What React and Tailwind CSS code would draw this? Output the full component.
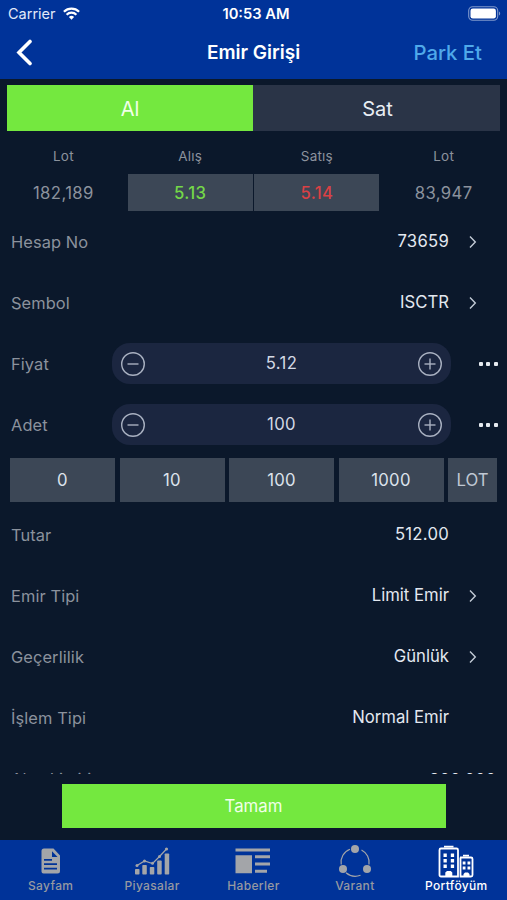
const ROW = "flex h-[61px] shrink-0 items-center pl-[11px]";
const LABEL = "pt-[2px] text-[16.4px] tracking-[0.1px] text-[#8b929d]";
const VALUE = "pt-px text-[16.7px] text-[#e3e8f0]";

function Chevron() {
  return (
    <svg className="ml-[19px] mr-[29px] mt-[1px]" width="10" height="14" viewBox="0 0 10 14" fill="none" stroke="#c3cbd6" strokeWidth="1.4">
      <path d="M2 1.5 7.3 7 2 12.5" />
    </svg>
  );
}

function Row({ label, value, chevron, numeric }) {
  return (
    <div className={ROW}>
      <span className={LABEL}>{label}</span>
      <span className={`ml-auto ${VALUE} ${numeric ? "tracking-[0.25px]" : ""}`}>{value}</span>
      {chevron ? <Chevron /> : <span className="w-[58px]" />}
    </div>
  );
}

function Circle({ plus }) {
  return (
    <svg width="26" height="26" viewBox="0 0 26 26" fill="none" stroke="#a9b1c1" strokeWidth="1.4">
      <circle cx="13" cy="13" r="11.3" />
      <path d="M7.5 13h11" />
      {plus && <path d="M13 7.5v11" />}
    </svg>
  );
}

function Stepper({ label, value }) {
  return (
    <div className={ROW}>
      <span className={`w-[101px] ${LABEL}`}>{label}</span>
      <div className="flex h-[41px] w-[339px] items-center justify-between rounded-[18px] bg-[#1b2640] px-[8px]">
        <Circle />
        <span className="pt-px text-[16.7px] tracking-[0.4px] text-[#d3d9e4]">{value}</span>
        <Circle plus />
      </div>
      <div className="ml-[28px] flex gap-[3.4px]">
        <i className="size-[4px] rounded-[1px] bg-[#e6eaf0]" />
        <i className="size-[4px] rounded-[1px] bg-[#e6eaf0]" />
        <i className="size-[4px] rounded-[1px] bg-[#e6eaf0]" />
      </div>
    </div>
  );
}

function Quote({ title, value, tone }) {
  return (
    <div className="flex w-[127.200px] flex-col items-center">
      <span className="flex h-[35px] items-center pb-[1px] text-[13.5px] tracking-[0.2px] text-[#8b929d]">{title}</span>
      <div className={`flex h-[37px] w-[125px] items-center justify-center pt-[2px] text-[16.7px] tracking-[0.4px] ${tone}`}>{value}</div>
    </div>
  );
}

function PageIcon() {
  return (
    <svg width="20" height="26" viewBox="0 0 20 26">
      <path fill="#a3a5a9" fillRule="evenodd" d="M3 .5h9.5L19 7.5V23a2.5 2.5 0 0 1-2.5 2.5h-14A2 2 0 0 1 .5 23.500V3A2.500 2.500 0 0 1 3 .5ZM11 3.200V9h5.600ZM3 11v1.800h8V11ZM3 15.200V17h13v-1.800ZM3 19.700v1.800h13v-1.800Z" />
    </svg>
  );
}

function ChartIcon() {
  return (
    <svg width="36" height="28" viewBox="0 0 36 28" fill="#a3a5a9">
      <rect x="1" y="22" width="4.500" height="5.500" rx=".8" />
      <rect x="8.300" y="18" width="4.500" height="9.500" rx=".8" />
      <rect x="15.800" y="20" width="4.500" height="7.500" rx=".8" />
      <rect x="23.200" y="13.500" width="4.500" height="14" rx=".8" />
      <rect x="30.700" y="6.500" width="4.500" height="21" rx=".8" />
      <path d="m3 18.500 7.500-4.500 8 2.500 7-7L32.500 2" fill="none" stroke="#a3a5a9" strokeWidth="1.200" />
      <circle cx="3" cy="18.500" r="1.500" />
      <circle cx="10.500" cy="14" r="1.500" />
      <circle cx="18.500" cy="16.300" r="1.500" />
      <circle cx="25.500" cy="9.500" r="1.500" />
      <circle cx="32.500" cy="2" r="1.600" />
    </svg>
  );
}

function NewsIcon() {
  return (
    <svg width="36" height="26" viewBox="0 0 36 26" fill="#a3a5a9">
      <path d="M.5.500h34.500v3H.5ZM.5 7.300H17v18H.5ZM20 7.300h15v3H20ZM20 14.500h15v3H20ZM20 21.700h12v3H20Z" />
    </svg>
  );
}

function RingIcon() {
  return (
    <svg width="34" height="34" viewBox="0 0 34 34" fill="#a3a5a9">
      <g fill="none" stroke="#a3a5a9" strokeWidth="1.200">
        <path d="M12 5.200A14 14 0 0 0 3.200 20.500" />
        <path d="M23.500 6A14 14 0 0 1 31 20.500" />
        <path d="M8 28.800a14.500 14.500 0 0 0 14.500 2.500" />
      </g>
      <circle cx="17" cy="5" r="4" />
      <circle cx="5" cy="25" r="4" />
      <circle cx="29" cy="25" r="4" />
    </svg>
  );
}

function TowersIcon() {
  return (
    <svg width="36" height="33" viewBox="0 0 36 33">
      <g fill="none" stroke="#fff" strokeWidth="1.800">
        <path d="M20 31.500H3a1.500 1.500 0 0 1-1.500-1.500V5A1.500 1.500 0 0 1 3 3.500h15.500A1.500 1.500 0 0 1 20 5Z" />
        <path d="M22 12.500h11a1.500 1.500 0 0 1 1.500 1.500v16a1.500 1.500 0 0 1-1.500 1.500H22.500V12.500" />
        <path d="M6 1.700h9.500M25 10.700h6" />
      </g>
      <g fill="#fff">
        <path d="M5.500 8.500h3.300V12H5.500ZM12.800 8.500h3.300V12h-3.300ZM5.500 14h3.300v3.500H5.500ZM12.800 14h3.300v3.500h-3.300ZM5.500 19.500h3.300V23H5.500ZM12.800 19.500h3.300V23h-3.300Z" />
        <path d="M24.700 16.500h2.800v3h-2.800ZM29.500 16.500h2.800v3h-2.800ZM24.700 21.500h2.800v3h-2.800ZM29.500 21.500h2.800v3h-2.800Z" />
        <path d="M7.300 32v-4.500L9 26h3.800l1.500 1.500V32ZM25.500 32v-3l1.500-1.500h3l1.500 1.500v3Z" />
      </g>
    </svg>
  );
}

const TABS = [
  { name: "Sayfam", icon: <PageIcon />, tone: "text-[#9699a1]" },
  { name: "Piyasalar", icon: <ChartIcon />, tone: "text-[#9699a1]" },
  { name: "Haberler", icon: <NewsIcon />, tone: "text-[#9699a1]" },
  { name: "Varant", icon: <RingIcon />, tone: "text-[#9699a1]" },
  { name: "Portföyüm", icon: <TowersIcon />, tone: "text-white" },
];

export default function App() {
  return (
    <div className="flex h-[900px] w-[507px] flex-col overflow-hidden bg-[#0b182b] font-['Inter','Liberation_Sans',sans-serif]">
      <header className="flex h-[79px] shrink-0 flex-col bg-[#003399] text-white">
        <div className="grid h-[27px] grid-cols-3 items-center pl-[8px] pr-[6px]">
          <div className="flex items-center gap-[7px] text-[14.500px] text-[#e2e9f8]">
            Carrier
            <svg width="17" height="13" viewBox="0 0 17 13" fill="none" stroke="#fff" strokeWidth="2.200">
              <path d="M.9 4.700a10.800 10.800 0 0 1 15.200 0M3.600 7.700a7 7 0 0 1 9.800 0" />
              <path d="M8.500 12.700 5.900 10a3.700 3.700 0 0 1 5.200 0Z" fill="#fff" stroke="none" />
            </svg>
          </div>
          <span className="pl-[3px] pt-[2px] text-center text-[14.700px] font-semibold">10:53 AM</span>
          <svg className="ml-auto" width="33" height="15" viewBox="0 0 33 15">
            <rect x=".7" y=".7" width="29" height="13.600" rx="4" fill="none" stroke="#7f99cc" strokeWidth="1.100" />
            <rect x="2.500" y="2.500" width="25.400" height="10" rx="2.300" fill="#fff" />
            <path d="M31 5.500v4c1.600-.5 1.600-3.500 0-4Z" fill="#7f99cc" />
          </svg>
        </div>
        <div className="grid h-[52px] grid-cols-3 items-center pl-[16px] pr-[25px]">
          <svg className="-mt-[2px]" width="18" height="27" viewBox="0 0 18 27" fill="none" stroke="#fff" strokeWidth="3.600" strokeLinecap="round">
            <path d="M14 2.500 3 13.500l11 11" />
          </svg>
          <span className="whitespace-nowrap pl-[9px] pt-px text-center text-[19px] font-semibold">Emir Girişi</span>
          <span className="text-right text-[20.300px] font-medium text-[#4fa9ea]">Park Et</span>
        </div>
      </header>

      <main className="flex h-[695px] shrink-0 flex-col overflow-hidden">
        <div className="mx-[7px] mt-[6px] flex h-[46px] shrink-0 text-[20px]">
          <div className="flex w-[246.500px] items-center justify-center bg-[#74e83f] pt-[2px] text-[#f1ffe9]">Al</div>
          <div className="flex w-[247.500px] items-center justify-center bg-[#2a3447] pl-[2px] pt-[2px] text-[#e8edf4]">Sat</div>
        </div>
        <div className="mt-[8px] flex h-[72px] shrink-0">
          <Quote title="Lot" value="182,189" tone="text-[#8b929d]" />
          <Quote title="Alış" value="5.13" tone="bg-[#3c4756] text-[#74d848] font-medium" />
          <Quote title="Satış" value="5.14" tone="bg-[#3c4756] text-[#d94145] font-medium" />
          <Quote title="Lot" value="83,947" tone="text-[#8b929d]" />
        </div>
        <Row label="Hesap No" value="73659" numeric chevron />
        <Row label="Sembol" value="ISCTR" chevron />
        <Stepper label="Fiyat" value="5.12" />
        <Stepper label="Adet" value="100" />
        <div className="mb-[2px] mt-[3px] flex h-[44px] shrink-0 gap-[4.500px] pl-[10px] text-[16.700px] tracking-[0.3px] text-[#dce3ec]">
          {["0", "10", "100", "1000"].map((n) => (
            <div key={n} className="flex w-[105px] items-center justify-center bg-[#3c4756] pt-px">{n}</div>
          ))}
          <div className="flex w-[49px] items-center justify-center bg-[#3c4756] pt-px tracking-normal text-[#c0c8d3]">LOT</div>
        </div>
        <Row label="Tutar" value="512.00" numeric />
        <Row label="Emir Tipi" value="Limit Emir" chevron />
        <Row label="Geçerlilik" value="Günlük" chevron />
        <Row label="İşlem Tipi" value="Normal Emir" />
        <div className={`${ROW} pr-[11px]`}>
          <span className={LABEL}>Alım Limiti</span>
          <span className="ml-auto pt-[4px] text-[16.700px] text-[#e3e8f0]">200,000</span>
        </div>
      </main>

      <div className="flex h-[66px] shrink-0 justify-center pt-[10px]">
        <div className="flex h-[44px] w-[384px] items-center justify-center bg-[#74e83f] pt-[1px] text-[16.800px] text-[#f1ffe9]">Tamam</div>
      </div>

      <nav className="grid h-[60px] shrink-0 grid-cols-5 bg-[#003399]">
        {TABS.map((t) => (
          <div key={t.name} className={`flex flex-col items-center text-[12px] font-medium tracking-[0.35px] ${t.tone}`}>
            <span className="flex h-[36px] items-center pt-[6px]">{t.icon}</span>
            <span className="leading-[19px]">{t.name}</span>
          </div>
        ))}
      </nav>
    </div>
  );
}
